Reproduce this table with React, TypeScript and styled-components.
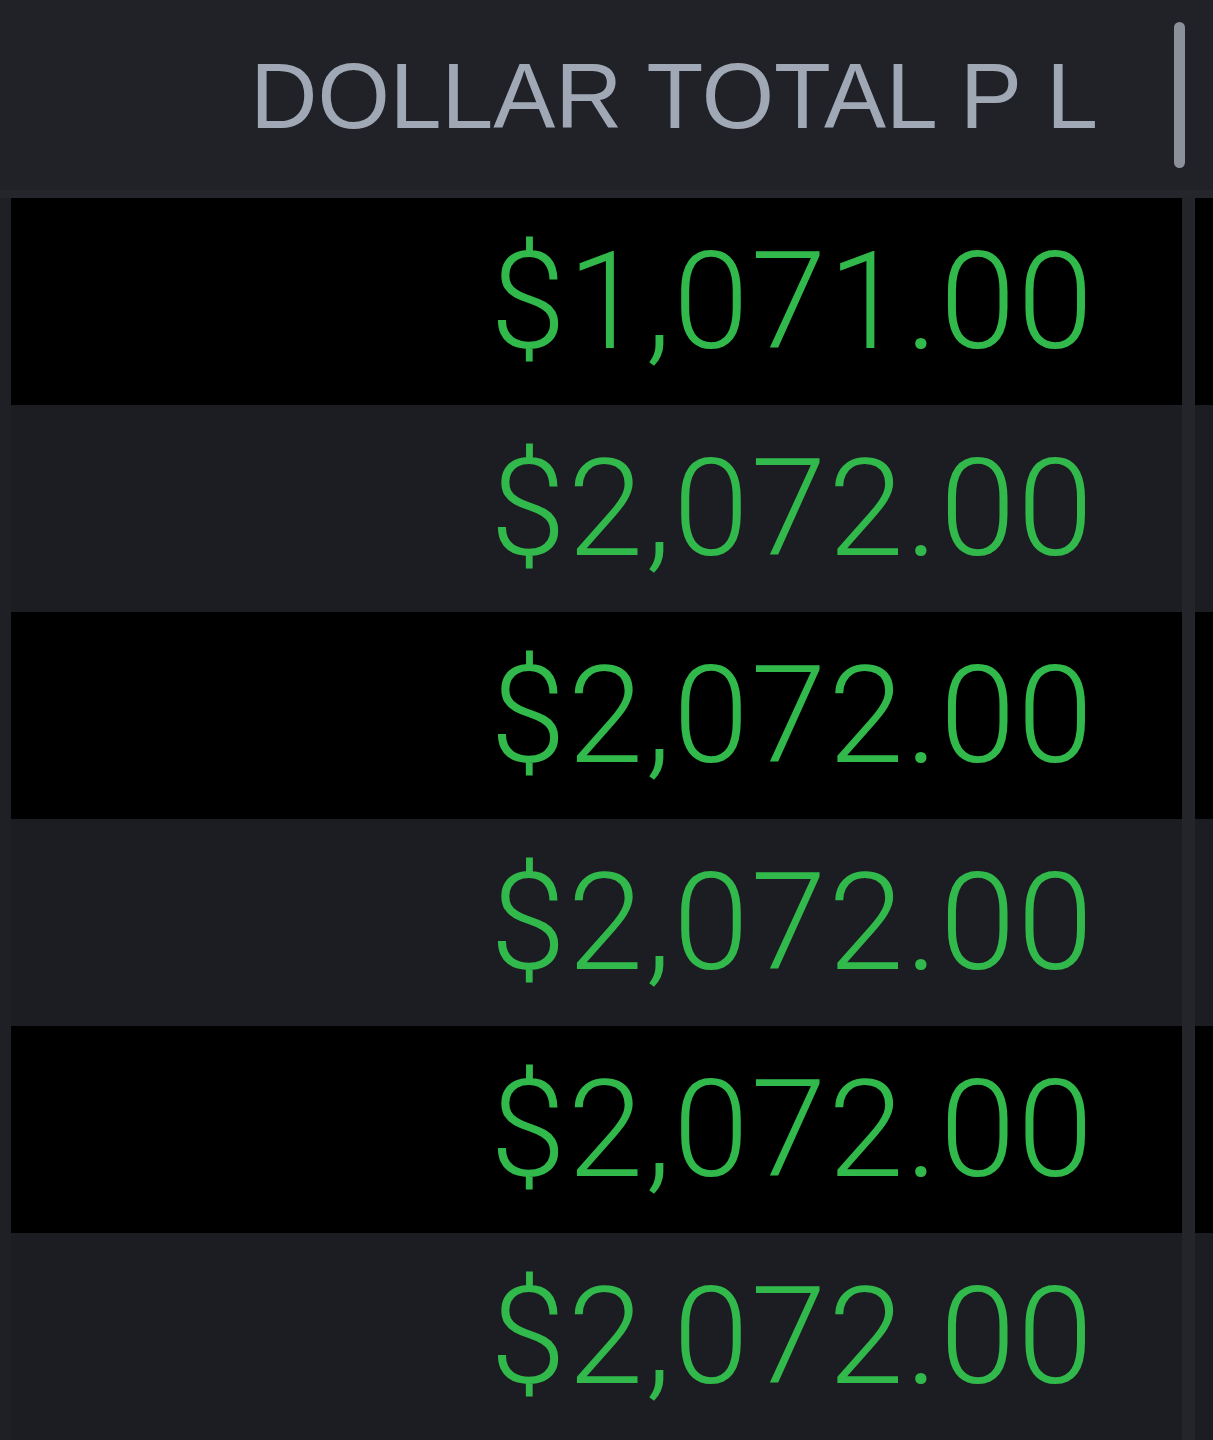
import React from "react";
import styled, { createGlobalStyle } from "styled-components";

const Global = createGlobalStyle`
  html, body { margin: 0; padding: 0; background: #1f2026; }
  body { width: 1213px; height: 1440px; overflow: hidden; font-family: Roboto, "Liberation Sans", sans-serif; }
`;

const Grid = styled.div`
  display: flex;
  flex-direction: column;
  width: 1213px;
  height: 1440px;
  background: #1f2026;
`;

const Header = styled.div`
  position: relative;
  height: 190px;
  display: flex;
  align-items: center;
  justify-content: flex-end;
  padding-right: 115px;
  border-bottom: 8px solid #24262c;
  background: #202228;
`;

const HeaderLabel = styled.span`
  font-family: "Liberation Sans", Arial, sans-serif;
  font-size: 93px;
  font-weight: 400;
  color: #a0a8b6;
  line-height: 1;
  margin-top: 2px;
`;

const Resizer = styled.div`
  position: absolute;
  right: 28px;
  top: 22px;
  width: 11px;
  height: 146px;
  border-radius: 6px;
  background: #8b9099;
`;

const Row = styled.div`
  display: flex;
  height: 207px;
  padding-left: 11px;
`;

const Cell = styled.div<{ $dark: boolean }>`
  width: 1171px;
  display: flex;
  align-items: center;
  justify-content: flex-end;
  padding-right: 87px;
  box-sizing: border-box;
  background: ${(p) => (p.$dark ? "#000000" : "#1c1d22")};
  color: #31b94b;
  font-size: 136px;
  font-weight: 300;
  letter-spacing: 2px;
  line-height: 1;
`;

const Divider = styled.div`
  width: 13px;
  background: #23252b;
`;

const NextCell = styled.div<{ $dark: boolean }>`
  flex: 1;
  background: ${(p) => (p.$dark ? "#000000" : "#1c1d22")};
`;

const values = ["$1,071.00", "$2,072.00", "$2,072.00", "$2,072.00", "$2,072.00", "$2,072.00"];

export default function App() {
  return (
    <>
      <Global />
      <Grid>
        <Header>
          <HeaderLabel>DOLLAR TOTAL P L</HeaderLabel>
          <Resizer />
        </Header>
        {values.map((v, i) => (
          <Row key={i}>
            <Cell $dark={i % 2 === 0}>{v}</Cell>
            <Divider />
            <NextCell $dark={i % 2 === 0} />
          </Row>
        ))}
      </Grid>
    </>
  );
}
